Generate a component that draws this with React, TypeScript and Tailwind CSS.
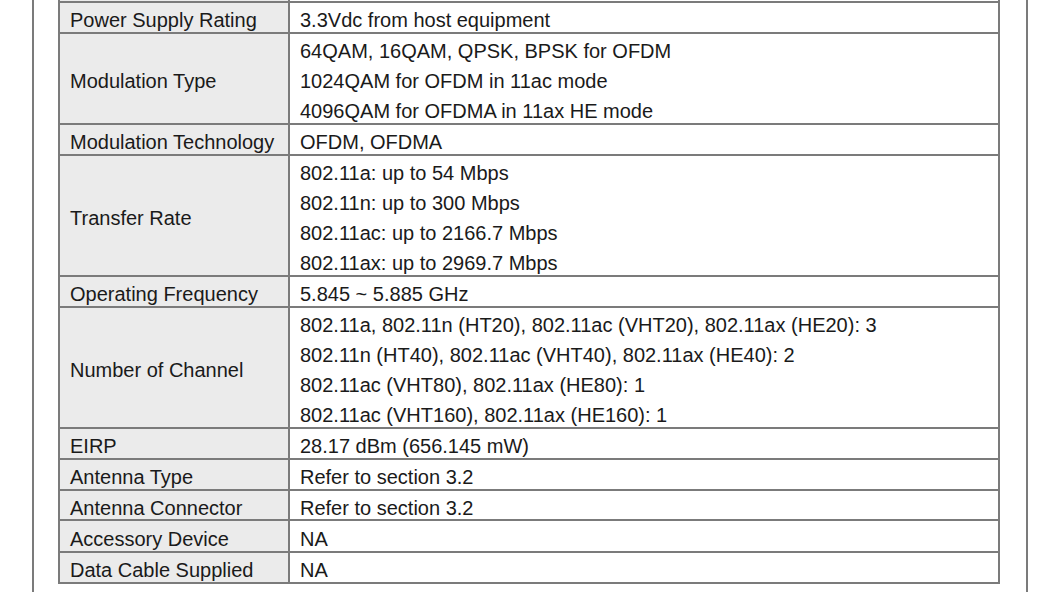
const rows: { label: string; values: string[]; h: string }[] = [
  { label: 'Power Supply Rating', values: ['3.3Vdc from host equipment'], h: 'h-[31px]' },
  {
    label: 'Modulation Type',
    values: [
      '64QAM, 16QAM, QPSK, BPSK for OFDM',
      '1024QAM for OFDM in 11ac mode',
      '4096QAM for OFDMA in 11ax HE mode',
    ],
    h: 'h-[91px]',
  },
  { label: 'Modulation Technology', values: ['OFDM, OFDMA'], h: 'h-[31px]' },
  {
    label: 'Transfer Rate',
    values: [
      '802.11a: up to 54 Mbps',
      '802.11n: up to 300 Mbps',
      '802.11ac: up to 2166.7 Mbps',
      '802.11ax: up to 2969.7 Mbps',
    ],
    h: 'h-[121px]',
  },
  { label: 'Operating Frequency', values: ['5.845 ~ 5.885 GHz'], h: 'h-[31px]' },
  {
    label: 'Number of Channel',
    values: [
      '802.11a, 802.11n (HT20), 802.11ac (VHT20), 802.11ax (HE20): 3',
      '802.11n (HT40), 802.11ac (VHT40), 802.11ax (HE40): 2',
      '802.11ac (VHT80), 802.11ax (HE80): 1',
      '802.11ac (VHT160), 802.11ax (HE160): 1',
    ],
    h: 'h-[121px]',
  },
  { label: 'EIRP', values: ['28.17 dBm (656.145 mW)'], h: 'h-[31px]' },
  { label: 'Antenna Type', values: ['Refer to section 3.2'], h: 'h-[31px]' },
  { label: 'Antenna Connector', values: ['Refer to section 3.2'], h: 'h-[30px]' },
  { label: 'Accessory Device', values: ['NA'], h: 'h-[32px]' },
  { label: 'Data Cable Supplied', values: ['NA'], h: 'h-[31px]' },
]

function Row({ label, values, h }: { label: string; values: string[]; h: string }) {
  return (
    <div className={`flex border-b-2 border-[#7b7b7b] ${h}`}>
      <div className="w-[232px] shrink-0 border-x-2 border-[#7b7b7b] bg-[#ebebeb] pl-[10px] pt-[5px] flex flex-col justify-center">
        <span>{label}</span>
      </div>
      <div className="flex-1 border-r-2 border-[#7b7b7b] pl-[10px] pt-[5px] flex flex-col justify-center">
        {values.map((v) => (
          <span key={v} className="whitespace-nowrap">
            {v}
          </span>
        ))}
      </div>
    </div>
  )
}

export default function App() {
  return (
    <div
      className="w-[1054px] h-[592px] overflow-hidden bg-white text-[20px] leading-[30px] text-[#1a1a1a]"
      style={{ fontFamily: '"Liberation Sans", Arial, sans-serif' }}
    >
      <div className="flow-root ml-[32px] w-[996px] h-full border-x-2 border-[#7b7b7b] pl-[24px]">
        <div className="w-[942px]">
          {/* previous row, mostly scrolled out of view */}
          <div className="-mt-[28px] flex border-b-2 border-[#7b7b7b] h-[31px]">
            <div className="w-[232px] shrink-0 border-x-2 border-[#7b7b7b] bg-[#ebebeb]" />
            <div className="flex-1 border-r-2 border-[#7b7b7b]" />
          </div>
          {rows.map((r) => (
            <Row key={r.label} {...r} />
          ))}
        </div>
      </div>
    </div>
  )
}
